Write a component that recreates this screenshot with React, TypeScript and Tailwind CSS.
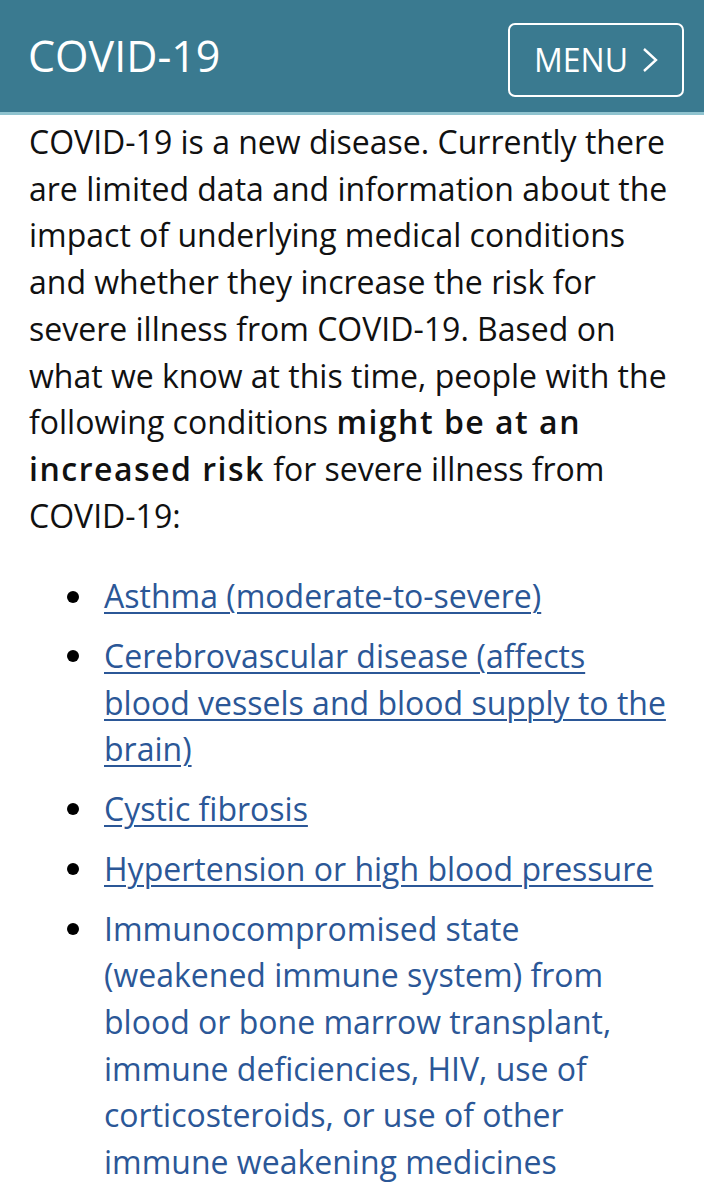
import React from "react";

const items: { text: string; link: boolean }[] = [
  { text: "Asthma (moderate-to-severe)", link: true },
  { text: "Cerebrovascular disease (affects blood vessels and blood supply to the brain)", link: true },
  { text: "Cystic fibrosis", link: true },
  { text: "Hypertension or high blood pressure", link: true },
  {
    text: "Immunocompromised state (weakened immune system) from blood or bone marrow transplant, immune deficiencies, HIV, use of corticosteroids, or use of other immune weakening medicines",
    link: false,
  },
];

export default function App() {
  return (
    <div className="w-[704px] h-[1200px] overflow-hidden bg-white" style={{ fontFamily: '"Open Sans", sans-serif' }}>
      <header className="h-[115px] bg-[#3a7a90] border-b-[3px] border-[#8fc3cf] flex items-center justify-between pl-[28px] pr-[20px]">
        <h1 className="text-white text-[43px] font-normal leading-none -mt-[2px]">COVID-19</h1>
        <button className="w-[176px] h-[74px] mt-[8px] border-2 border-white rounded-[7px] flex items-center justify-center gap-[14px] text-white text-[32px]">
          <span>MENU</span>
          <svg width="16" height="26" viewBox="0 0 16 26" fill="none" stroke="white" strokeWidth="2.4">
            <path d="M2 2 L14 13 L2 24" />
          </svg>
        </button>
      </header>
      <main className="pl-[29px] pr-[30px] pt-[4px] text-[32px] leading-[46.7px] text-[#111]">
        <p>
          COVID-19 is a new disease. Currently there are limited data and information about the impact of underlying medical conditions and whether they increase the risk for severe illness from COVID-19. Based on what we know at this time, people with the following conditions{" "}
          <strong className="font-semibold tracking-[1.5px]">might be at an increased risk</strong> for severe illness from COVID-19:
        </p>
        <ul className="mt-[34px] pl-[38px] list-none">
          {items.map((it, i) => (
            <li key={i} className="mb-[13px] flex gap-[25px] text-[#2b5797]">
              <span className="h-[46.7px] flex items-center shrink-0">
                <span className="block w-[12px] h-[12px] rounded-full bg-black" />
              </span>
              <span className="min-w-0">
                {it.link ? (
                  <a href="#" className="underline underline-offset-[4px] decoration-[1.5px]">
                    {it.text}
                  </a>
                ) : (
                  it.text
                )}
              </span>
            </li>
          ))}
        </ul>
      </main>
    </div>
  );
}
